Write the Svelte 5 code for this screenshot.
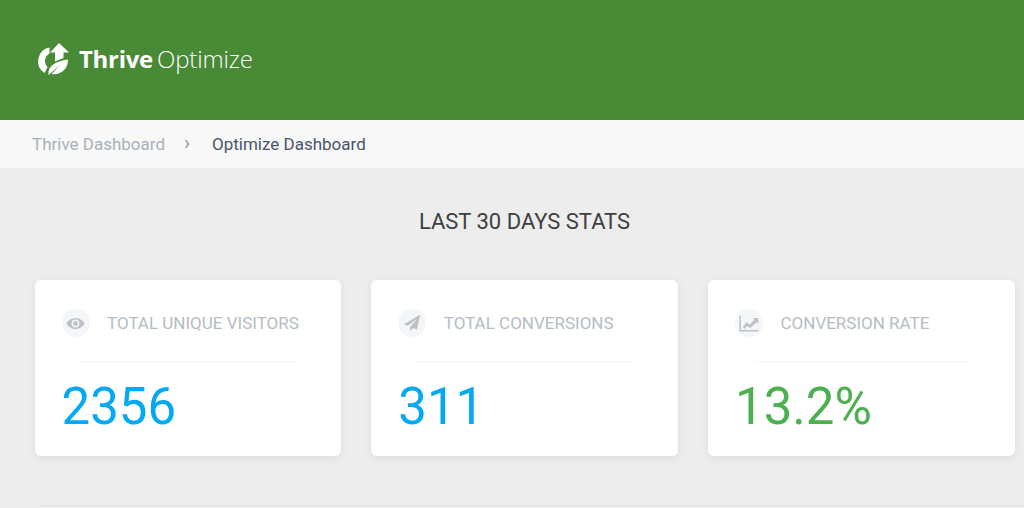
<script>
	const stats = [
		{ label: 'TOTAL UNIQUE VISITORS', value: '2356', icon: 'eye', color: 'blue' },
		{ label: 'TOTAL CONVERSIONS', value: '311', icon: 'plane', color: 'blue' },
		{ label: 'CONVERSION RATE', value: '13.2%', icon: 'chart', color: 'green' }
	];
</script>

<header class="topbar">
	<div class="logo">
		<svg width="33" height="32" viewBox="0 0 33 32" aria-hidden="true">
			<path d="M13.500 4.500 A14 14 0 0 0 8.500 30 L11.500 24 A8.500 8.500 0 0 1 13.500 10.500 Z" fill="#fff" />
			<path d="M23 0 L33 9.500 L27.500 9.500 L27.500 15 L19 18.500 L19 9.500 L14 9.500 Z" fill="#fff" />
			<path d="M12.500 32 C11.500 24 18 18.500 32 16.500 C32 26 25 32.500 15.500 31 L24 22 Z" fill="#fff" />
		</svg>
		<span class="brand"><b>Thrive</b><span class="thin">Optimize</span></span>
	</div>
</header>

<nav class="crumbs">
	<span class="muted">Thrive Dashboard</span>
	<span class="sep">›</span>
	<span class="current">Optimize Dashboard</span>
</nav>

<main class="page">
	<h1>LAST 30 DAYS STATS</h1>
	<div class="cards">
		{#each stats as stat}
			<section class="card">
				<div class="card-head">
					<span class="icon">
						{#if stat.icon === 'eye'}
							<svg width="19" height="19" viewBox="0 0 24 24"><path fill="#bcc1c6" fill-rule="evenodd" d="M12 5C6.500 5 2.300 8.600 0.500 12c1.800 3.400 6 7 11.500 7s9.700-3.600 11.500-7C21.700 8.600 17.500 5 12 5zm0 12a5 5 0 1 1 0-10 5 5 0 0 1 0 10zm0-8a3 3 0 1 0 0 6 3 3 0 0 0 0-6z" /></svg>
						{:else if stat.icon === 'plane'}
							<svg width="18" height="18" viewBox="0 0 24 24"><path fill="#bcc1c6" d="M23 1 L1 13.500 L6.500 15.800 L19 6 L9.500 17.200 V23 L13.500 18.800 L18.500 21 Z" /></svg>
						{:else}
							<svg width="20" height="17" viewBox="0 0 26 22"><path fill="none" stroke="#bcc1c6" stroke-width="2" d="M1.500 1 V20.500 H25" /><path fill="#bcc1c6" d="M5 15.500 L10 9.500 L14 12.500 L20 6 L18 4 H25 V11 L23 9 L14.300 17 L10.300 13.800 L7 18 Z" /></svg>
						{/if}
					</span>
					<span class="label">{stat.label}</span>
				</div>
				<div class="rule"></div>
				<div class="value {stat.color}">{stat.value}</div>
			</section>
		{/each}
	</div>
	<div class="bottom-line"></div>
</main>

<style>
	:global(body) {
		background: #ededed;
		font-family: Roboto, "Liberation Sans", sans-serif;
		overflow: hidden;
	}

	.topbar {
		height: 120px;
		background: #488a36;
		display: flex;
		align-items: center;
		padding-left: 36px;
	}

	.logo {
		display: flex;
		align-items: center;
		gap: 10px;
		color: #fff;
		margin-bottom: 3px;
	}

	.brand {
		font-family: "Open Sans", sans-serif;
		font-size: 24px;
		letter-spacing: -0.3px;
	}

	.brand b {
		font-weight: 700;
		margin-right: 4px;
	}

	.thin {
		font-weight: 300;
		letter-spacing: -0.15px;
	}

	.crumbs {
		height: 48px;
		background: #f8f8f8;
		display: flex;
		align-items: center;
		padding-left: 32px;
		font-size: 17px;
	}

	.muted {
		color: #a9b1b9;
	}

	.sep {
		color: #8f979f;
		font-size: 20px;
		margin: -3px 22px 0 19px;
	}

	.current {
		color: #4a5568;
	}

	.page {
		padding: 0 0 0 34.500px;
	}

	h1 {
		margin: 0;
		padding: 42px 9.500px 0 0;
		height: 70px;
		font-size: 22px;
		line-height: 24px;
		font-weight: 400;
		color: #3f3f3f;
		text-align: center;
	}

	.cards {
		display: grid;
		grid-template-columns: repeat(3, 306.750px);
		gap: 30px;
	}

	.card {
		height: 176px;
		background: #fff;
		border-radius: 6px;
		box-shadow: 0 2px 8px rgba(0, 0, 0, 0.08);
		padding: 29px 27px 0;
		box-sizing: border-box;
	}

	.card-head {
		display: flex;
		align-items: center;
		gap: 17.500px;
		height: 28px;
	}

	.icon {
		width: 28px;
		height: 28px;
		border-radius: 50%;
		background: #f5f6f8;
		display: flex;
		align-items: center;
		justify-content: center;
	}

	.label {
		font-size: 17px;
		color: #b5bcc3;
	}

	.rule {
		height: 1px;
		background: #f6f6f6;
		margin: 24px 18px 0;
	}

	.value {
		font-size: 51px;
		line-height: 60px;
		margin-top: 15px;
	}

	.blue {
		color: #04a9f4;
	}

	.green {
		color: #4caf50;
	}

	.bottom-line {
		height: 1px;
		background: #e2e2e2;
		margin: 49px 0 0 3px;
	}
</style>
